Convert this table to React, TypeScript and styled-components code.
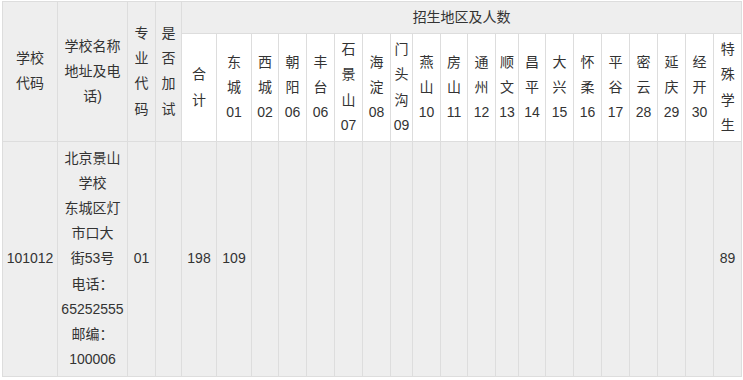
import React from "react";
import styled, { createGlobalStyle } from "styled-components";

const GlobalStyle = createGlobalStyle`
  html, body {
    margin: 0;
    padding: 0;
    background: #ffffff;
  }
  body {
    font-family: "Liberation Sans", "Noto Sans CJK SC", sans-serif;
    color: #333333;
  }
`;

// column widths, border included
const widths = [
  55, 70, 28, 26, 35, 35, 27, 28, 28, 28, 28, 22, 28, 27, 28, 23, 27, 28, 28,
  28, 28, 28, 28, 28,
];

const leadHeads: string[][] = [
  ["学校", "代码"],
  ["学校名称", "地址及电", "话)"],
  ["专", "业", "代", "码"],
  ["是", "否", "加", "试"],
];

const regionHeads: string[][] = [
  ["合", "计"],
  ["东", "城", "01"],
  ["西", "城", "02"],
  ["朝", "阳", "06"],
  ["丰", "台", "06"],
  ["石", "景", "山", "07"],
  ["海", "淀", "08"],
  ["门", "头", "沟", "09"],
  ["燕", "山", "10"],
  ["房", "山", "11"],
  ["通", "州", "12"],
  ["顺", "文", "13"],
  ["昌", "平", "14"],
  ["大", "兴", "15"],
  ["怀", "柔", "16"],
  ["平", "谷", "17"],
  ["密", "云", "28"],
  ["延", "庆", "29"],
  ["经", "开", "30"],
  ["特", "殊", "学", "生"],
];

const schoolInfo = [
  "北京景山",
  "学校",
  "东城区灯",
  "市口大",
  "街53号",
  "电话：",
  "65252555",
  "邮编：",
  "100006",
];

const counts: string[] = [
  "198",
  "109",
  ...Array.from({ length: 17 }, () => ""),
  "89",
];

const Table = styled.table`
  margin: 1px 0 0 2px;
  width: 740px;
  table-layout: fixed;
  border-collapse: separate;
  border-spacing: 0;
  border-top: 1px solid #dddddd;
  border-left: 1px solid #dddddd;
  font-size: 14px;
  line-height: 1.8;
`;

const Cell = styled.td<{ $white?: boolean }>`
  box-sizing: border-box;
  padding: 3px 0;
  border-right: 1px solid #dddddd;
  border-bottom: 1px solid #dddddd;
  background: ${(p) => (p.$white ? "#ffffff" : "#eeeeee")};
  text-align: center;
  vertical-align: middle;
  font-weight: normal;
  white-space: nowrap;
`;

const Row = styled.tr<{ $h: number }>`
  height: ${(p) => p.$h}px;
`;

const Line = styled.span`
  display: block;
`;

function Lines({ items }: { items: string[] }) {
  return (
    <>
      {items.map((t, i) => (
        <Line key={i}>{t}</Line>
      ))}
    </>
  );
}

export default function App() {
  return (
    <>
      <GlobalStyle />
      <Table>
        <colgroup>
          {widths.map((w, i) => (
            <col key={i} style={{ width: w }} />
          ))}
        </colgroup>
        <thead>
          <Row $h={32}>
            {leadHeads.map((h, i) => (
              <Cell as="th" rowSpan={2} key={i}>
                <Lines items={h} />
              </Cell>
            ))}
            <Cell as="th" colSpan={20}>
              招生地区及人数
            </Cell>
          </Row>
          <Row $h={107}>
            {regionHeads.map((h, i) => (
              <Cell as="th" $white key={i}>
                <Lines items={h} />
              </Cell>
            ))}
          </Row>
        </thead>
        <tbody>
          <Row $h={235}>
            <Cell>101012</Cell>
            <Cell>
              <Lines items={schoolInfo} />
            </Cell>
            <Cell>01</Cell>
            <Cell />
            {counts.map((c, i) => (
              <Cell key={i}>{c}</Cell>
            ))}
          </Row>
        </tbody>
      </Table>
    </>
  );
}
